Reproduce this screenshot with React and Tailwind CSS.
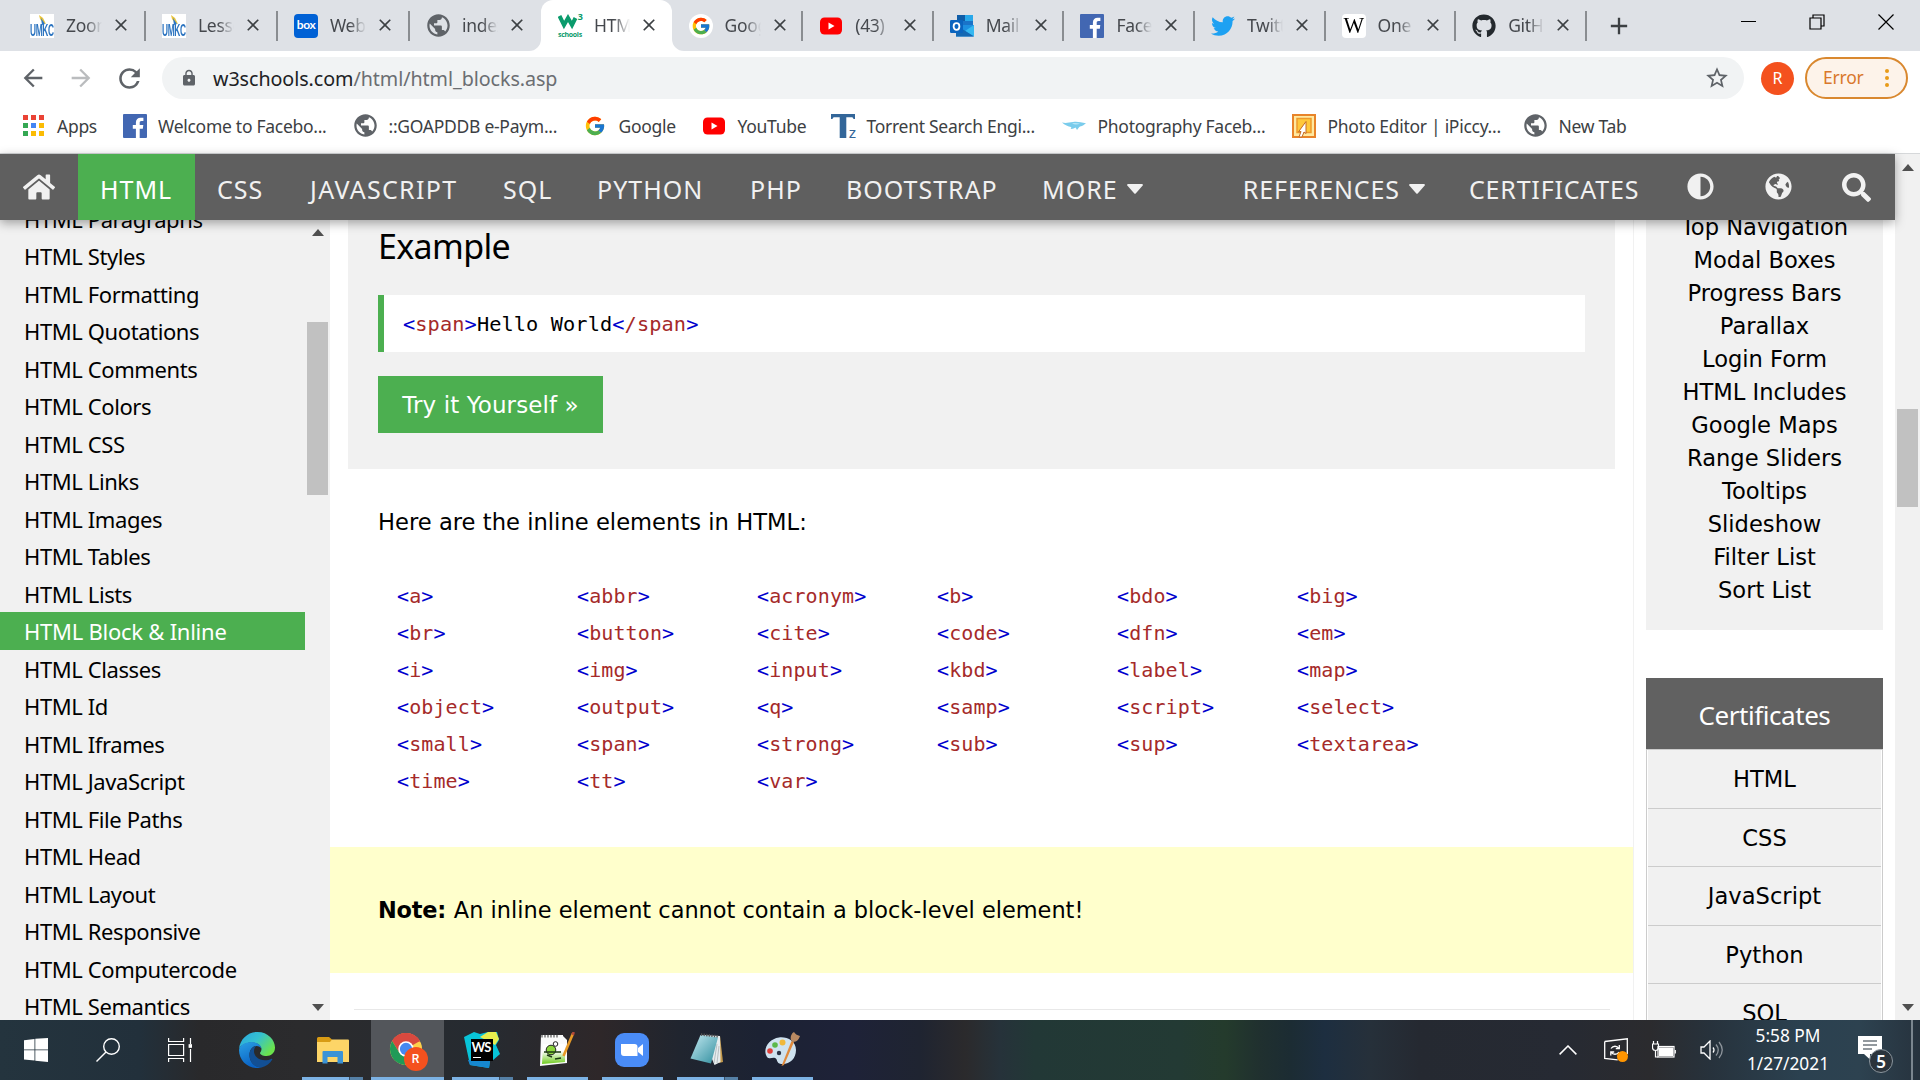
import { FcGoogle } from "react-icons/fc";
import { FaHome, FaAdjust, FaGlobeAmericas, FaSearch, FaGithub, FaTwitter } from "react-icons/fa";
import { MdArrowBack, MdArrowForward, MdRefresh, MdLock, MdStarBorder, MdPublic, MdClose, MdAdd } from "react-icons/md";

/* ---------- site icons ---------- */

const Umkc = () => (
  <div className="relative h-6 w-6 overflow-hidden bg-white">
    <svg viewBox="0 0 24 24" className="absolute inset-0 h-6 w-6">
      <path d="M9 1l4 3 3 6-3-1-3-4z" fill="#e8c33c" />
      <path d="M11 4l4 6-3 1z" fill="#2e76c4" />
    </svg>
    <span className="absolute left-0 top-[9px] origin-left scale-x-[0.52] font-['Liberation_Sans'] text-[16px] leading-[15px] font-bold tracking-[-0.6px] text-[#2c74c0]">UMKC</span>
  </div>
);

const Box = () => (
  <div className="flex h-6 w-6 items-center justify-center rounded-[4px] bg-[#0061d5] font-['Lato'] text-[12px] leading-none font-bold tracking-[-0.4px] text-white">
    <span className="-mt-px">box</span>
  </div>
);

const Globe = () => <MdPublic className="h-[27px] w-[27px] -m-[1.5px] text-[#5f6368]" />;

const W3 = () => (
  <div className="relative h-6 w-6">
    <svg viewBox="0 0 24 24" className="absolute inset-0 h-6 w-6" fill="none">
      <path d="M1.500 2l4.500 9 4-7 4 7 3.500-7" stroke="#0a9b6c" strokeWidth="4" />
    </svg>
    <span className="absolute -top-[2px] -right-[1px] font-['Open_Sans'] text-[9px] leading-none font-bold text-[#0a9b6c]">3</span>
    <span className="absolute left-0 top-[17px] font-['Open_Sans'] text-[7px] leading-[8px] font-bold tracking-[-0.3px] text-[#0a9b6c]">schools</span>
  </div>
);

const GoogleDisc = () => (
  <div className="flex h-6 w-6 items-center justify-center rounded-full bg-white"><FcGoogle className="h-5 w-5" /></div>
);

const YouTube = () => (
  <svg viewBox="0 0 24 24" className="h-6 w-6">
    <rect x="1" y="3.5" width="22" height="17" rx="4.5" fill="#f00" />
    <path d="M9.5 8.5v7l6-3.5z" fill="#fff" />
  </svg>
);

const Outlook = () => (
  <svg viewBox="0 0 24 24" className="h-6 w-6">
    <rect x="7" y="1" width="16" height="11" fill="#1a73c8" />
    <path d="M7 1h8v6H7z" fill="#0f5da8" />
    <path d="M15 1h8v6h-8z" fill="#28a8ea" />
    <path d="M6 11h18v10.500a1 1 0 0 1-1 1H6z" fill="#1d8fe0" />
    <path d="M24 11l-9 6 9 5.500z" fill="#35b8f1" />
    <path d="M6 11l18 11.500H6z" fill="#1468b3" />
    <rect y="6" width="13" height="13" rx="1.200" fill="#0a64bf" />
    <ellipse cx="6.500" cy="12.500" rx="2.900" ry="3.300" fill="none" stroke="#fff" strokeWidth="1.800" />
  </svg>
);

const Facebook = () => (
  <svg viewBox="0 0 24 24" className="h-6 w-6">
    <rect width="24" height="24" rx="1" fill="#4267b2" />
    <path d="M16.700 24v-9.300h3.100l.5-3.600h-3.600V8.800c0-1 .3-1.800 1.800-1.800h1.900V3.800c-.3 0-1.500-.1-2.800-.1-2.800 0-4.700 1.700-4.700 4.800v2.600H9.800v3.600h3.100V24z" fill="#fff" />
  </svg>
);

const Wiki = () => (
  <div className="flex h-6 w-6 items-center justify-center rounded-[4px] bg-white font-['Liberation_Serif'] text-[23px] leading-none text-black">
    <span className="scale-x-[0.95] tracking-tight">W</span>
  </div>
);

const Torrentz = () => (
  <div className="relative h-6 w-6">
    <svg viewBox="0 0 24 24" className="h-6 w-6"><path d="M0 0h24v5h-1.500c-.3-1.300-1-1.700-2.500-1.700h-4.700V24H8.700V3.300H4C2.500 3.300 1.800 3.700 1.500 5H0z" fill="#336699" /></svg>
    <span className="absolute -right-[1px] bottom-[-2px] font-['Liberation_Sans'] text-[15px] leading-[15px] text-[#336699]">z</span>
  </div>
);

const Fish = () => (
  <svg viewBox="0 0 24 24" className="h-6 w-6">
    <path d="M0 8.500c4 1 7 0 11-.5 5-.6 8 .5 13 1.200-2 1.400-3 2.800-6 3.300-1 .2-1.500 2-3 3.500-.5-1-.8-1.800-1.500-2.500-1.500 1-3.500 1.800-5 1.300 1-.8 1-1.300.5-1.800C6.500 12.800 2.500 11 0 8.500z" fill="#7accec" />
    <path d="M10 9.500c3-.8 5-.4 8 0-2 1-5 1.400-8 0z" fill="#b7e5f6" />
  </svg>
);

const IPiccy = () => (
  <svg viewBox="0 0 24 24" className="h-6 w-6">
    <rect x="1" y="1" width="22" height="22" fill="#ffe9a0" stroke="#e8842a" strokeWidth="2" />
    <rect x="5" y="4.500" width="14" height="14" fill="#ffc83a" stroke="#ee9a2c" strokeWidth="1.500" />
    <path d="M14 7.500v12l-2-1.500-2 5H7l2-5.500-2.500.3z" fill="#fff" stroke="#c46a22" strokeWidth="1" />
  </svg>
);

const AppsGrid = () => (
  <div className="grid grid-cols-3 gap-[3px]">
    {["bg-[#ea4335]", "bg-[#ea4335]", "bg-[#ea4335]", "bg-[#34a853]", "bg-[#4285f4]", "bg-[#fbbc04]", "bg-[#34a853]", "bg-[#fbbc04]", "bg-[#fbbc04]"].map((c, i) => (
      <div key={i} className={"h-[5px] w-[5px] " + c} />
    ))}
  </div>
);

/* ---------- browser chrome ---------- */

const tabs = [
  ["Zoom", <Umkc />], ["Lesson", <Umkc />], ["Web", <Box />], ["index", <Globe />], ["HTML", <W3 />],
  ["Goog", <GoogleDisc />], ["(43)", <YouTube />], ["Mail", <Outlook />], ["Face", <Facebook />],
  ["Twitt", <FaTwitter className="h-6 w-6 text-[#1da1f2]" />], ["One", <Wiki />], ["GitHu", <FaGithub className="h-6 w-6 text-[#24292e]" />],
];

function Tab({ title, icon, active, beforeActive, wide }) {
  return (
    <div className={"relative flex h-[51px] shrink-0 items-center " + (wide ? "w-[132px] " : "w-[130.600px] ") + (active ? "rounded-t-[12px] bg-white" : "")}>
      {active && (
        <>
          <svg viewBox="0 0 12 12" className="absolute -left-3 bottom-0 h-3 w-3"><path d="M12 0v12H0A12 12 0 0 0 12 0z" fill="#fff" /></svg>
          <svg viewBox="0 0 12 12" className="absolute -right-3 bottom-0 h-3 w-3"><path d="M0 0v12h12A12 12 0 0 1 0 0z" fill="#fff" /></svg>
        </>
      )}
      <div className="ml-[17px] h-6 w-6 shrink-0">{icon}</div>
      <div className="mb-[2px] ml-3 w-[36px] overflow-hidden text-[17.500px] leading-[26px] tracking-[-0.3px] whitespace-nowrap text-[#45484d] [mask-image:linear-gradient(to_right,black_55%,transparent)]">{title}</div>
      <MdClose className="mb-px ml-[9px] h-[20px] w-[20px] shrink-0 text-[#3c4043]" />
      {!active && !beforeActive && <div className="absolute right-[-1px] top-[11px] h-[30px] w-[2px] bg-[#8a8d91]" />}
    </div>
  );
}

const bookmarks = [
  ["Welcome to Facebo...", <Facebook />, "w-[230.500px]"],
  ["::GOAPDDB e-Paym...", <Globe />, "w-[230px]"],
  ["Google", <FcGoogle className="h-[22px] w-[22px]" />, "w-[119px]"],
  ["YouTube", <YouTube />, "w-[129px]"],
  ["Torrent Search Engi...", <Torrentz />, "w-[231px]"],
  ["Photography Faceb...", <Fish />, "w-[230px]"],
  ["Photo Editor | iPiccy...", <IPiccy />, "w-[231px]"],
  ["New Tab", <Globe />, "w-[120px]"],
];

function Browser() {
  return (
    <header className="h-[154px] shrink-0 border-b border-[#d6d8da] bg-white font-['Noto_Sans',sans-serif]">
      <div className="flex h-[51px] bg-[#dee1e6] pl-[13px]">
        {tabs.map(([t, ic], i) => <Tab key={i} title={t} icon={ic} active={i === 4} beforeActive={i === 3} wide={i < 4} />)}
        <div className="flex w-[66px] items-center justify-center"><MdAdd className="h-7 w-7 text-[#3c4043]" /></div>
        <div className="ml-auto flex h-[43px] items-center">
          <div className="flex w-[68px] justify-center"><div className="h-[1.500px] w-[15px] bg-black" /></div>
          <div className="flex w-[69px] justify-center">
            <svg viewBox="0 0 16 16" className="h-4 w-4" fill="none" stroke="#000" strokeWidth="1.200"><path d="M1 4h11v11H1zM4 4V1h11v11h-3" /></svg>
          </div>
          <div className="flex w-[69px] justify-center">
            <svg viewBox="0 0 16 16" className="h-4 w-4" stroke="#000" strokeWidth="1.200"><path d="M.5.5l15 15M15.500.5l-15 15" /></svg>
          </div>
        </div>
      </div>
      <div className="flex h-[54px] items-center">
        <div className="flex w-[162px] items-center">
          <MdArrowBack className="ml-[19px] h-[28px] w-[28px] text-[#5f6368]" />
          <MdArrowForward className="ml-[20px] h-[28px] w-[28px] text-[#babcbe]" />
          <MdRefresh className="ml-[18.500px] h-[31px] w-[31px] text-[#5f6368]" />
        </div>
        <div className="flex h-[42px] w-[1582px] items-center rounded-full bg-[#f1f3f4]">
          <MdLock className="ml-[18px] h-[18px] w-[18px] text-[#5f6368]" />
          <div className="ml-[15px] pt-px text-[19.700px] leading-none tracking-[-0.06px] text-[#202124]">w3schools.com<span className="text-[#6b6e72]">/html/html_blocks.asp</span></div>
          <MdStarBorder className="mr-[14px] ml-auto h-[26px] w-[26px] text-[#5f6368]" />
        </div>
        <div className="ml-[17px] flex h-[33px] w-[33px] items-center justify-center rounded-full bg-[#f4511e] text-[16px] leading-none text-white">R</div>
        <div className="ml-[11px] flex h-[42px] w-[103px] items-center rounded-full border-2 border-[#d9882f] bg-[#fdf3ea] pl-[16px] text-[17.500px] leading-none tracking-[-0.2px] text-[#d9782c]">
          Error
          <div className="ml-auto flex flex-col gap-[3px] pr-[17px]">
            <i className="h-1 w-1 rounded-full bg-[#e89b18]" /><i className="h-1 w-1 rounded-full bg-[#e89b18]" /><i className="h-1 w-1 rounded-full bg-[#e89b18]" />
          </div>
        </div>
      </div>
      <div className="flex h-[41px] items-center text-[17.500px] leading-[24px] tracking-[-0.28px] text-[#3c4043]">
        <div className="flex w-[122.500px] items-center pl-[22.500px]"><AppsGrid /><span className="ml-[13.500px]">Apps</span></div>
        {bookmarks.map(([t, ic, w]) => (
          <div key={t} className={"flex shrink-0 items-center gap-[11.500px] whitespace-nowrap " + w}>
            <div className="flex h-6 w-6 shrink-0 items-center justify-center">{ic}</div>{t}
          </div>
        ))}
      </div>
    </header>
  );
}

/* ---------- page ---------- */

const Caret = () => <svg viewBox="0 0 16 10" className="ml-[9px] h-[10px] w-4"><path d="M1 0h14a1 1 0 0 1 .7 1.600l-7 7.800a1 1 0 0 1-1.400 0l-7-7.800A1 1 0 0 1 1 0z" fill="#f1f1f1" /></svg>;

const navLeft = [["CSS", "w-[93px]"], ["JAVASCRIPT", "w-[193px] tracking-[1.300px]"], ["SQL", "w-[94px]"], ["PYTHON", "w-[153px]"], ["PHP", "w-[96px]"], ["BOOTSTRAP", "w-[196px]"]];

function TopNav() {
  return (
    <nav className="relative z-10 flex h-[66px] shrink-0 items-center bg-[#5f5f5f] font-['Noto_Sans',sans-serif] text-[25px] leading-none tracking-[1px] text-[#f1f1f1] shadow-[0_3px_10px_rgba(0,0,0,0.35)]">
      <div className="flex w-[77px] justify-center pb-px"><FaHome className="h-[32px] w-[32px]" /></div>
      <div className="ml-px flex h-full w-[117px] items-center bg-[#4caf50] pt-1 pl-[22px] text-white">HTML</div>
      {navLeft.map(([t, w]) => <div key={t} className={"shrink-0 pt-1 pl-[22px] " + w}>{t}</div>)}
      <div className="flex items-center pt-1 pl-[22px]">MORE<Caret /></div>
      <div className="ml-auto flex items-center pt-1 tracking-[0.900px]">REFERENCES<Caret /></div>
      <div className="w-[236px] pt-1 pl-[44px] tracking-[0.800px]">CERTIFICATES</div>
      <div className="flex w-[78px] justify-center pb-0.5"><FaAdjust className="h-[27px] w-[27px]" /></div>
      <div className="flex w-[78px] justify-center pb-0.5"><FaGlobeAmericas className="h-[27px] w-[27px]" /></div>
      <div className="flex w-[78px] justify-center"><FaSearch className="h-[29px] w-[29px]" /></div>
    </nav>
  );
}

const lessons = ["Paragraphs", "Styles", "Formatting", "Quotations", "Comments", "Colors", "CSS", "Links", "Images", "Tables", "Lists", "Block & Inline", "Classes", "Id", "Iframes", "JavaScript", "File Paths", "Head", "Layout", "Responsive", "Computercode", "Semantics"];

const Up = () => <svg viewBox="0 0 12 7" className="h-[7px] w-3"><path d="M6 0l6 7H0z" fill="#505050" /></svg>;
const Down = () => <svg viewBox="0 0 12 7" className="h-[7px] w-3"><path d="M0 0h12L6 7z" fill="#505050" /></svg>;

function Sidebar() {
  return (
    <aside className="flex w-[330px] shrink-0 bg-[#f1f1f1]">
      <div className="w-[305px] overflow-hidden">
        <ul className="-mt-[20.500px] font-['Noto_Sans',sans-serif] text-[22px] tracking-[-0.4px]">
          {lessons.map((l, i) => (
            <li key={l} className={"h-[37.500px] pl-[24px] leading-[38px] whitespace-nowrap " + (i === 11 ? "bg-[#4caf50] tracking-[-0.250px] text-white" : "text-black")}>HTML {l}</li>
          ))}
        </ul>
      </div>
      <div className="flex w-[25px] flex-col items-center py-[9px]">
        <Up />
        <div className="mt-[86px] h-[173px] w-[21px] bg-[#c1c1c1]" />
        <div className="mt-auto"><Down /></div>
      </div>
    </aside>
  );
}

const elements = ["a", "abbr", "acronym", "b", "bdo", "big", "br", "button", "cite", "code", "dfn", "em", "i", "img", "input", "kbd", "label", "map", "object", "output", "q", "samp", "script", "select", "small", "span", "strong", "sub", "sup", "textarea", "time", "tt", "var"];

const Tag = ({ children }) => <><span className="text-[#0000cd]">&lt;</span><span className="text-[#a52a2a]">{children}</span><span className="text-[#0000cd]">&gt;</span></>;

function Article() {
  return (
    <main className="flex w-[1304px] shrink-0 flex-col overflow-hidden border-r border-[#f1f1f1] bg-white font-['DejaVu_Sans',sans-serif] text-[22.600px] text-black">
      <section className="mx-[18px] h-[249px] w-[1267px] shrink-0 bg-[#f1f1f1] px-[30px] pt-[6px]">
        <h3 className="font-['Noto_Sans',sans-serif] text-[34px] leading-[40px] tracking-[-0.65px]">Example</h3>
        <pre className="mt-[29px] h-[57px] border-l-[6px] border-[#4caf50] bg-white pl-[19px] font-['DejaVu_Sans_Mono',monospace] text-[20.300px] leading-[58px] tracking-[0.100px]"><Tag>span</Tag>Hello World<Tag>/span</Tag></pre>
        <button className="mt-[24px] block h-[57px] w-[225px] bg-[#4caf50] pt-[2px] text-[23px] tracking-[0.1px] whitespace-nowrap text-white">Try it Yourself »</button>
      </section>
      <p className="mt-[37px] pl-[48px] leading-[32px] tracking-[0.030px]">Here are the inline elements in HTML:</p>
      <div className="mt-[40px] grid shrink-0 grid-cols-[repeat(6,180px)] pl-[67px] font-['DejaVu_Sans_Mono',monospace] text-[20px] leading-[37px] tracking-[0.110px]">
        {elements.map((e) => <div key={e}><Tag>{e}</Tag></div>)}
      </div>
      <div className="mt-[47px] h-[126px] shrink-0 bg-[#ffffcc] pl-[48px] text-[22.450px] leading-[127px]"><b className="tracking-[-0.250px]">Note:</b><span className="pl-[8px]">An inline element cannot contain a block-level element!</span></div>
      <div className="mt-[36px] ml-[24px] h-px w-[1256px] shrink-0 bg-[#e8e8e8]" />
    </main>
  );
}

const howTo = ["Top Navigation", "Modal Boxes", "Progress Bars", "Parallax", "Login Form", "HTML Includes", "Google Maps", "Range Sliders", "Tooltips", "Slideshow", "Filter List", "Sort List"];

function RightColumn() {
  return (
    <aside className="flex flex-col overflow-hidden bg-white pl-3 text-center font-['DejaVu_Sans',sans-serif] text-[22.600px] text-black">
      <div className="h-[410px] w-[237px] shrink-0 bg-[#f1f1f1]">
        <ul className="-mt-[10px]">{howTo.map((h) => <li key={h} className="h-[33px] leading-[34px]">{h}</li>)}</ul>
      </div>
      <div className="mt-[48px] w-[237px] shrink-0">
        <h4 className="h-[71px] bg-[#616161] font-['Noto_Sans',sans-serif] text-[26px] leading-[74px] tracking-[-0.45px] text-white">Certificates</h4>
        <ul className="border border-[#ccc] px-px">
          {["HTML", "CSS", "JavaScript", "Python", "SQL"].map((c) => <li key={c} className="h-[58.500px] border-b border-[#ccc] bg-[#f1f1f1] leading-[58px]">{c}</li>)}
        </ul>
      </div>
    </aside>
  );
}

/* ---------- taskbar ---------- */

const Edge = () => (
  <svg viewBox="0 0 36 36" className="h-9 w-9">
    <defs>
      <linearGradient id="eg" x1="0" y1="0" x2="1" y2="0.6"><stop offset="0" stopColor="#28a5e0" /><stop offset=".5" stopColor="#35c1d0" /><stop offset="1" stopColor="#6be34c" /></linearGradient>
      <linearGradient id="eb" x1="0" y1="0" x2="0.4" y2="1"><stop offset="0" stopColor="#2aa0e4" /><stop offset="1" stopColor="#0a62c4" /></linearGradient>
    </defs>
    <path d="M0 17C1 7 9 0 18.500 0 29 0 36 8 36 15.500c0 5.500-4 8.500-8.500 8.500-4 0-6.500-1.500-6.500-3 0-.8 1.500-1.500 1.500-4 0-3.500-4-6.500-9.500-6.500C6.500 10.500 2 13 0 17z" fill="url(#eg)" />
    <path d="M0 18c.5-4 5-8 12.500-8 6 0 10 3.500 10 7-.5-2-3-3-5-3-4 0-7 4-7 9 0 7 5 12 12 12.400-1.500.4-3 .6-4.500.6C8 36 0 28 0 18z" fill="url(#eb)" />
    <path d="M17 14c-4 1-6.500 4.500-6.500 9 0 7 5 13 12 12.400 5-1.200 8.500-4.200 10.800-7.900.3-.6-.3-1-.8-.7-2 1-4 1.500-6.500 1.500-6.500 0-11-4.300-11-9 0-2.500 1-4.300 2-5.300z" fill="#124f94" />
  </svg>
);

const Explorer = () => (
  <svg viewBox="0 0 32 27" className="h-[27px] w-8">
    <path d="M0 1.500A1.500 1.500 0 0 1 1.500 0H12l3 2.500V7H0z" fill="#d89b14" />
    <path d="M0 5h13l2-2.500h16a1 1 0 0 1 1 1V25H0z" fill="#fdd567" />
    <path d="M5.500 15a1 1 0 0 1 1-1h18.500a1 1 0 0 1 1 1v11.500h-5.500V20h-10v6.500h-5z" fill="#3b93d6" />
  </svg>
);

const Chrome = () => (
  <div className="relative h-9 w-9">
    <svg viewBox="0 0 36 36" className="h-[34px] w-[34px]">
      <circle cx="18" cy="18" r="17" fill="#fdd04b" />
      <path d="M18 18L3.300 9.500A17 17 0 0 1 32.700 9.500z" fill="#d8493f" />
      <path d="M18 10h14.900A17 17 0 0 0 3.300 9.500L11 22z" fill="#d8493f" />
      <path d="M3.300 9.500A17 17 0 0 0 17 35l8-13-7 4-7-4z" fill="#209a57" />
      <circle cx="18" cy="18" r="8.200" fill="#fff" />
      <circle cx="18" cy="18" r="6.500" fill="#4688f1" />
    </svg>
    <div className="absolute -right-[3px] -bottom-[3px] flex h-6 w-6 items-center justify-center rounded-full bg-[#f4511e] font-['Roboto'] text-[12px] leading-none font-medium text-white">R</div>
  </div>
);

const WebStorm = () => (
  <div className="relative h-9 w-9">
    <svg viewBox="0 0 36 36" className="h-9 w-9">
      <path d="M0 5L10 0l6 2 8-2h9l2 8-3 5 4 9-8 7H26l-1 7-19-3z" fill="#08c4d8" />
      <path d="M4 28l22 1-1 7-19-3z" fill="#1688d0" />
      <path d="M16 5l8-5h8l3 7-4 6z" fill="#e8ee4e" />
    </svg>
    <div className="absolute top-[7px] left-[7px] h-[22px] w-[22px] bg-black font-['Lato'] leading-none text-white">
      <span className="absolute top-[2px] left-px text-[13px] font-bold tracking-[-0.8px]">WS</span>
      <i className="absolute bottom-[3px] left-[2px] h-[1.500px] w-2 bg-white" />
    </div>
  </div>
);

const NotepadPP = () => (
  <svg viewBox="0 0 36 36" className="h-9 w-9">
    <defs><linearGradient id="ng" x1="0" y1="0" x2="0" y2="1"><stop offset=".35" stopColor="#fff" /><stop offset="1" stopColor="#6ecb1c" /></linearGradient></defs>
    <path d="M2 3h22v1l4 4v23L1 34z" fill="#fafafa" />
    <path d="M4 12h22v18L3 32z" fill="url(#ng)" />
    <path d="M3 1.500v4M6 1.500v4M9 1.500v4M12 1.500v4M15 1.500v4M18 1.500v4" stroke="#333" strokeWidth="1" />
    <circle cx="12" cy="18" r="4.800" fill="#8bd63c" stroke="#222" />
    <circle cx="16.500" cy="12" r="2.300" fill="#fff" stroke="#222" />
    <path d="M5 20h17M16 27l6-1M8 23l5 2" stroke="#1c3a12" strokeWidth="1.600" />
    <path d="M34 1.500L24.500 24" stroke="#e79a26" strokeWidth="2.600" />
    <path d="M34.700 0l-1 3" stroke="#b34a3a" strokeWidth="2.600" />
  </svg>
);

const Zoom = () => (
  <svg viewBox="0 0 34 34" className="h-[34px] w-[34px]">
    <rect width="34" height="34" rx="9" fill="#4a8cf7" />
    <path d="M6 11h13.500a3 3 0 0 1 3 3v9H9a3 3 0 0 1-3-3zM23 15l5-4v12l-5-4z" fill="#fff" />
  </svg>
);

const Notepad = () => (
  <svg viewBox="0 0 36 36" className="h-9 w-9">
    <defs><linearGradient id="np" x1="0" y1="0" x2="1" y2="1"><stop offset="0" stopColor="#c4eaf2" /><stop offset="1" stopColor="#2f8d9d" /></linearGradient></defs>
    <path d="M31 4l3 26-4 1z" fill="#c49a4c" />
    <path d="M13 3l18 1 .5 26-6 3z" fill="#e6ecee" />
    <path d="M11.500 3l17.500 2.500-7 26-20.500-5z" fill="url(#np)" />
    <path d="M28 12l-3 19M30 14l-2 17" stroke="#aab4b8" strokeWidth=".8" />
    <path d="M12 2.500l18 2" stroke="#555" strokeWidth="2.500" strokeDasharray="1.300 1.300" />
  </svg>
);

const Paint = () => (
  <svg viewBox="0 0 36 36" className="h-9 w-9">
    <path d="M15 5.500C23 4.500 32 9 32 18c0 9-7 15-15 14-5-.6-3-5-6-6s-5 2-8-1C-2 17 5 6.800 15 5.500z" fill="#cfe2ef" />
    <circle cx="6" cy="19" r="2.800" fill="#e0403a" /><circle cx="11" cy="13" r="2.800" fill="#5cb84a" /><circle cx="18.500" cy="10.500" r="3" fill="#f1b83a" />
    <circle cx="15" cy="21" r="2.200" fill="#2b3346" />
    <path d="M27.500 9L17.500 34l2.500-1 10-23z" fill="#e08a3c" />
    <path d="M27 8c-1-4 1-7 3-8 1 2 3 3 6 4-1 3-3 6-7 6z" fill="#b98a62" />
  </svg>
);

const running = [
  [<Explorer />, "split"], [<Chrome />, "active"], [<WebStorm />, "split"], [<NotepadPP />, ""], [<Zoom />, ""], [<Notepad />, "split"], [<Paint />, ""],
];

function Taskbar() {
  return (
    <footer className="flex h-[60px] shrink-0 items-stretch bg-[linear-gradient(to_right,#24343e_0px,#22303b_140px,#29292b_200px,#2b2b2d_300px,#262b31_480px,#2e2729_600px,#20252f_680px,#1c2233_760px,#1e2238_850px,#1f2431_920px,#2b2a2c_965px,#26323a_1000px,#223836_1035px,#233a34_1180px,#243b2c_1225px,#20302f_1260px,#1c2c33_1290px,#1d2e40_1325px,#26303a_1370px,#252931_1420px,#262a33_1560px,#2b2b2e_1650px,#27323c_1710px,#2b4150_1800px,#2d4250_1860px,#27333e_1920px)]">
      <div className="flex w-[72px] items-center justify-center">
        <svg viewBox="0 0 24 24" className="h-6 w-6" fill="#fff"><path d="M0 2.200L10.500.9v10.500H0zM11.300.8L24 0v11.400H11.300zM0 12.300h10.500v10.300L0 21.400zM11.300 12.300H24V24l-12.700-1.300z" /></svg>
      </div>
      <div className="flex w-[72px] items-center justify-center">
        <svg viewBox="0 0 24 24" className="h-6 w-6" fill="none" stroke="#fff" strokeWidth="1.400"><circle cx="15.500" cy="8.500" r="7.800" /><path d="M10 14L.5 23.500" /></svg>
      </div>
      <div className="flex w-[72px] items-center justify-center">
        <svg viewBox="0 0 24 24" className="h-6 w-6" fill="none" stroke="#fff" strokeWidth="1.200"><path d="M.6 0v3.500h15V0M.6 6.500h15v11H.6zM.6 24v-3.500h15V24M22.500 0v6M22.500 11v13" /><rect x="21.200" y="6.800" width="2.400" height="2.400" fill="#fff" /></svg>
      </div>
      <div className="flex w-[79px] items-center justify-center pl-[3px]"><Edge /></div>
      {running.map(([ic, kind], i) => (
        <div key={i} className="flex w-[75px] flex-col items-center">
          <div className={"flex h-[57px] items-center justify-center pt-[3px] " + (kind === "active" ? "w-[73px] bg-[#53565b]" : "w-[61px]") + (i > 0 ? " pr-[2px]" : "")}>{ic}</div>
          <div className={"flex h-[3px] bg-[#7cb2e4] " + (kind === "active" ? "w-[73px]" : "w-[61px]")}>
            {kind === "split" && <div className="ml-auto h-[3px] w-[14px] border-l border-[#3a5068] bg-[#5580a6]" />}
          </div>
        </div>
      ))}
      <div className="ml-auto flex items-center font-['Noto_Sans',sans-serif] text-white">
        <svg viewBox="0 0 18 10" className="h-[10px] w-[18px]" fill="none" stroke="#fff" strokeWidth="1.500"><path d="M.6 9.400L9 1l8.400 8.400" /></svg>
        <svg viewBox="0 0 24 24" className="ml-[27px] h-6 w-6" fill="none" stroke="#fff" strokeWidth="1.300">
          <path d="M.7 3.500L23.300.8V16M.7 3.500v17l13 1.300" />
          <path d="M7 10.500c2-3 6-3 8 0M15.300 7v3.700h-3.500M15 14c-2 3-6 3-8 0M6.800 17.500V14h3.400" />
          <circle cx="18.500" cy="18.500" r="5.500" fill="#ff9500" stroke="none" />
        </svg>
        <svg viewBox="0 0 24 18" className="ml-6 h-[18px] w-6" fill="none" stroke="#fff" strokeWidth="1.200">
          <rect x="6" y="5.500" width="16" height="10.500" /><rect x="7.500" y="7" width="13" height="7.500" fill="#fff" /><path d="M23.300 9v3.500M1.500 0v3M5.500 0v3M.5 3h6v3.500a3 3 0 0 1-6 0zM3.500 9.500V16H6" />
        </svg>
        <svg viewBox="0 0 24 20" className="ml-[24px] h-5 w-6" fill="none" stroke="#fff" strokeWidth="1.300">
          <path d="M1 7h3l6-6v18l-6-6H1zM13 7.500q2 2.500 0 5" /><path d="M16 4.500q4.500 5.500 0 11M19 2q6.500 8 0 16" stroke="#8d949b" />
        </svg>
        <div className="ml-[18px] flex w-[92px] flex-col items-center text-[17.300px] leading-[28px]"><span>5:58 PM</span><span>1/27/2021</span></div>
        <div className="relative ml-[22px] h-9 w-[37px]">
          <svg viewBox="0 0 24 24" className="absolute top-[4px] left-[2px] h-6 w-6"><path d="M0 0h24v18H12v5.500L6 18H0z" fill="#fff" /><path d="M5 5h14M5 9h14M5 13h9" stroke="#28343e" strokeWidth="1.200" /></svg>
          <div className="absolute right-0 bottom-[-5px] flex h-6 w-6 items-center justify-center rounded-full border border-[#8b959d] bg-[#2b343c] text-[17px] leading-none font-semibold">5</div>
        </div>
        <div className="mr-[7px] ml-[18px] h-[60px] w-[2px] bg-[#7b868f]" />
      </div>
    </footer>
  );
}

export default function App() {
  return (
    <div className="flex h-[1080px] w-[1920px] flex-col overflow-hidden bg-white">
      <Browser />
      <div className="flex h-[866px] shrink-0">
        <div className="flex w-[1895px] flex-col">
          <TopNav />
          <div className="flex h-[800px]">
            <Sidebar />
            <Article />
            <RightColumn />
          </div>
        </div>
        <div className="flex w-[25px] flex-col items-center bg-[#f1f1f1] py-[10px]">
          <Up />
          <div className="mt-[238px] h-[98px] w-[21px] bg-[#c1c1c1]" />
          <div className="mt-auto -mb-px"><Down /></div>
        </div>
      </div>
      <Taskbar />
    </div>
  );
}
